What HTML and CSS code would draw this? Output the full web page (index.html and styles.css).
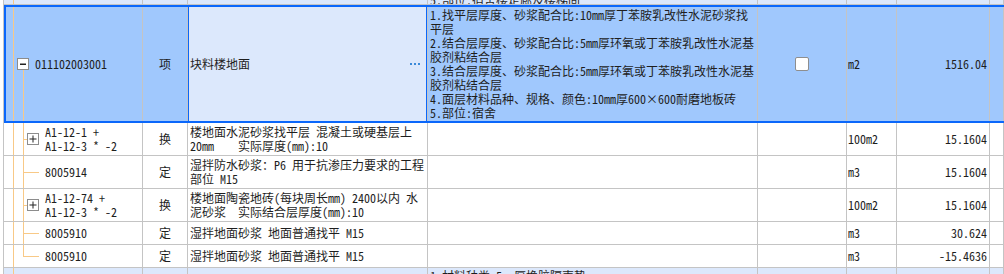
FILE: index.html
```html
<!DOCTYPE html>
<html lang="zh-CN">
<head>
<meta charset="utf-8">
<title>清单</title>
<link rel="stylesheet" href="styles.css">
</head>
<body>
<div class="table">
  <div class="row prev">
    <div class="cell code g-root"></div>
    <div class="cell type"></div>
    <div class="cell name"></div>
    <div class="cell feat clip"><span>5.部位:宿舍楼走廊及楼梯间</span></div>
    <div class="cell chk"></div>
    <div class="cell unit"></div>
    <div class="cell qty"></div>
    <div class="cell rest"></div>
  </div>

  <div class="row sel">
    <div class="cell code g-parent">
      <span class="tog"><svg width="10" height="10" viewBox="0 0 10 10"><rect x="2" y="4.5" width="6" height="1.5" fill="#222"/></svg></span>
      <span>011102003001</span>
    </div>
    <div class="cell type">项</div>
    <div class="cell name focus">
      <span>块料楼地面</span>
      <svg class="more" width="10" height="2" viewBox="0 0 10 2"><rect x="0" y="0" width="2" height="2" fill="#3b8ad9"/><rect x="4" y="0" width="2" height="2" fill="#3b8ad9"/><rect x="8" y="0" width="2" height="2" fill="#3b8ad9"/></svg>
    </div>
    <div class="cell feat">
      <div class="lines">
        <div>1.找平层厚度、砂浆配合比:10mm厚丁苯胺乳改性水泥砂浆找</div>
        <div>平层</div>
        <div>2.结合层厚度、砂浆配合比:5mm厚环氧或丁苯胺乳改性水泥基</div>
        <div>胶剂粘结合层</div>
        <div>3.结合层厚度、砂浆配合比:5mm厚环氧或丁苯胺乳改性水泥基</div>
        <div>胶剂粘结合层</div>
        <div>4.面层材料品种、规格、颜色:10mm厚600×600耐磨地板砖</div>
        <div>5.部位:宿舍</div>
      </div>
    </div>
    <div class="cell chk"><span class="box"></span></div>
    <div class="cell unit">m2</div>
    <div class="cell qty">1516.04</div>
    <div class="cell rest"></div>
  </div>

  <div class="row tall">
    <div class="cell code g-child">
      <span class="tog"><svg width="10" height="10" viewBox="0 0 10 10"><rect x="1.5" y="4.5" width="7" height="1" fill="#222"/><rect x="4.5" y="1.5" width="1" height="7" fill="#222"/></svg></span>
      <div class="lines"><div>A1-12-1 +</div><div>A1-12-3 * -2</div></div>
    </div>
    <div class="cell type">换</div>
    <div class="cell name"><div class="lines"><div>楼地面水泥砂浆找平层 混凝土或硬基层上</div><div class="pre">20mm    实际厚度(mm):10</div></div></div>
    <div class="cell feat"></div>
    <div class="cell chk"></div>
    <div class="cell unit">100m2</div>
    <div class="cell qty">15.1604</div>
    <div class="cell rest"></div>
  </div>

  <div class="row tall">
    <div class="cell code g-leaf"><span>8005914</span></div>
    <div class="cell type">定</div>
    <div class="cell name"><div class="lines"><div>湿拌防水砂浆：P6 用于抗渗压力要求的工程</div><div>部位 M15</div></div></div>
    <div class="cell feat"></div>
    <div class="cell chk"></div>
    <div class="cell unit">m3</div>
    <div class="cell qty">15.1604</div>
    <div class="cell rest"></div>
  </div>

  <div class="row tall">
    <div class="cell code g-child">
      <span class="tog"><svg width="10" height="10" viewBox="0 0 10 10"><rect x="1.5" y="4.5" width="7" height="1" fill="#222"/><rect x="4.5" y="1.5" width="1" height="7" fill="#222"/></svg></span>
      <div class="lines"><div>A1-12-74 +</div><div>A1-12-3 * -2</div></div>
    </div>
    <div class="cell type">换</div>
    <div class="cell name"><div class="lines"><div>楼地面陶瓷地砖(每块周长mm) 2400以内 水</div><div class="pre">泥砂浆  实际结合层厚度(mm):10</div></div></div>
    <div class="cell feat"></div>
    <div class="cell chk"></div>
    <div class="cell unit">100m2</div>
    <div class="cell qty">15.1604</div>
    <div class="cell rest"></div>
  </div>

  <div class="row short">
    <div class="cell code g-leaf"><span>8005910</span></div>
    <div class="cell type">定</div>
    <div class="cell name">湿拌地面砂浆 地面普通找平 M15</div>
    <div class="cell feat"></div>
    <div class="cell chk"></div>
    <div class="cell unit">m3</div>
    <div class="cell qty">30.624</div>
    <div class="cell rest"></div>
  </div>

  <div class="row short">
    <div class="cell code g-last"><span>8005910</span></div>
    <div class="cell type">定</div>
    <div class="cell name">湿拌地面砂浆 地面普通找平 M15</div>
    <div class="cell feat"></div>
    <div class="cell chk"></div>
    <div class="cell unit">m3</div>
    <div class="cell qty">-15.4636</div>
    <div class="cell rest"></div>
  </div>

  <div class="row next">
    <div class="cell code g-root"></div>
    <div class="cell type"></div>
    <div class="cell name"></div>
    <div class="cell feat top"><span>1.材料种类:5mm厚橡胶隔声垫</span></div>
    <div class="cell chk"></div>
    <div class="cell unit"></div>
    <div class="cell qty"></div>
    <div class="cell rest"></div>
  </div>
</div>
</body>
</html>
```

FILE: styles.css
```css
html, body {
  margin: 0;
  padding: 0;
  background: #ffffff;
  overflow: hidden;
}

body {
  width: 1004px;
  height: 274px;
  font-family: "Noto Sans Mono CJK SC", "Noto Sans CJK SC", "DejaVu Sans Mono", monospace;
  font-size: 12px;
  line-height: 14px;
  color: #1e1e1e;
}

.table {
  margin-left: 3px;
  height: 274px;
  overflow: hidden;
}

.row {
  display: grid;
  grid-template-columns: 139px 45px 240px 330px 89px 50px 93px 1fr;
  border-left: 1px solid #c4c4c4;
  border-bottom: 1px solid #c4c4c4;
  box-sizing: border-box;
  position: relative;
}

.cell {
  border-right: 1px solid #c4c4c4;
  box-sizing: border-box;
  display: flex;
  align-items: center;
  min-width: 0;
  overflow: hidden;
  white-space: nowrap;
}

.lines > div {
  white-space: pre;
}

.pre {
  white-space: pre;
}

/* rows */
.prev {
  height: 5px;
  background: #dce8fc;
}

.sel {
  height: 118px;
  background: #a0c8fd;
}

.sel::after {
  content: "";
  position: absolute;
  top: 0;
  bottom: -1px;
  left: 0;
  right: 0;
  border: 2px solid #0a67fb;
  border-right: none;
  pointer-events: none;
  z-index: 3;
}

.tall {
  height: 33px;
}

.short {
  height: 23px;
}

.next {
  height: 6px;
  border-bottom: none;
  background: #dce8fc;
}

/* columns */
.code {
  padding-left: 41px;
  background-repeat: no-repeat;
}

.tog {
  width: 12px;
  height: 12px;
  box-sizing: border-box;
  border: 1px solid #8c8c8c;
  background: #ffffff;
  display: flex;
  align-items: center;
  justify-content: center;
  margin-right: 6px;
  flex: none;
}

.tog svg {
  display: block;
}

.g-root {
  background-image: linear-gradient(#f8c987, #f8c987);
  background-position: 9px 0;
  background-size: 1px 100%;
}

.g-parent {
  padding-left: 13px;
  background-image:
    linear-gradient(#f8c987, #f8c987),
    linear-gradient(#f8c987, #f8c987);
  background-position: 9px 0, 19px 100%;
  background-size: 1px 100%, 1px calc(50% - 6px);
}

.g-child {
  padding-left: 23px;
  background-image:
    linear-gradient(#f8c987, #f8c987),
    linear-gradient(#f8c987, #f8c987),
    linear-gradient(#f8c987, #f8c987);
  background-position: 9px 0, 19px 0, 19px 50%;
  background-size: 1px 100%, 1px 100%, 4px 1px;
}

.g-leaf {
  background-image:
    linear-gradient(#f8c987, #f8c987),
    linear-gradient(#f8c987, #f8c987),
    linear-gradient(#f8c987, #f8c987);
  background-position: 9px 0, 19px 0, 19px 50%;
  background-size: 1px 100%, 1px 100%, 16px 1px;
}

.g-last {
  background-image:
    linear-gradient(#f8c987, #f8c987),
    linear-gradient(#f8c987, #f8c987),
    linear-gradient(#f8c987, #f8c987);
  background-position: 9px 0, 19px 0, 19px 50%;
  background-size: 1px 100%, 1px 50%, 16px 1px;
}

.type {
  justify-content: center;
}

.name {
  padding-left: 2px;
}

.focus {
  position: relative;
  background: #dce8fc;
  justify-content: space-between;
  padding-right: 7px;
}

.focus::after {
  content: "";
  position: absolute;
  top: 0;
  bottom: 0;
  left: -1px;
  right: -1px;
  border-left: 2px solid #0a67fb;
  border-right: 2px solid #0a67fb;
  pointer-events: none;
  z-index: 2;
}

.more {
  display: block;
  margin-top: 1px;
}

.feat {
  padding-left: 2px;
}

.clip {
  align-items: flex-end;
}

.clip span {
  margin-bottom: -3px;
}

.top {
  align-items: flex-start;
}

.top span {
  margin-top: 1px;
}

.chk {
  justify-content: center;
}

.box {
  width: 14px;
  height: 14px;
  box-sizing: border-box;
  border: 1px solid #8e8e8e;
  border-radius: 2px;
  background: #ffffff;
  margin-left: -1px;
}

.unit {
  padding-left: 1px;
}

.qty {
  justify-content: flex-end;
  padding-right: 2px;
}
```
